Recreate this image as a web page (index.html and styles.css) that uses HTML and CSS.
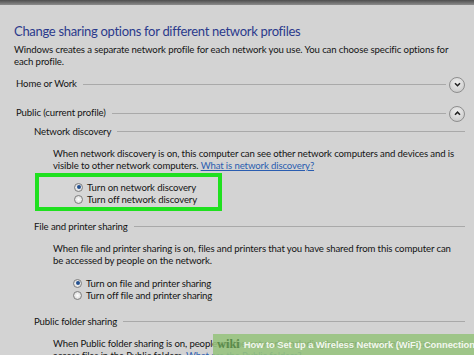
FILE: index.html
```html
<!DOCTYPE html>
<html>
<head>
<meta charset="utf-8">
<link rel="stylesheet" href="styles.css">
</head>
<body>
<div class="topbar"></div>
<div class="page">
  <h1 class="title">Change sharing options for different network profiles</h1>
  <p class="intro">Windows creates a separate network profile for each network you use. You can choose specific options for<br>each profile.</p>

  <div class="group">
    <span class="group-label">Home or Work</span>
    <span class="rule"></span>
    <span class="chev"><svg width="11" height="11" viewBox="0 0 11 11"><path d="M3 4.2 L5.5 6.7 L8 4.2" fill="none" stroke="#222" stroke-width="1.6"/></svg></span>
  </div>

  <div class="group public">
    <span class="group-label">Public (current profile)</span>
    <span class="rule"></span>
    <span class="chev"><svg width="11" height="11" viewBox="0 0 11 11"><path d="M3 6.7 L5.5 4.2 L8 6.7" fill="none" stroke="#222" stroke-width="1.6"/></svg></span>
  </div>

  <div class="section first">
    <span class="section-label">Network discovery</span>
    <span class="rule"></span>
  </div>
  <p class="desc">When network discovery is on, this computer can see other network computers and devices and is<br>visible to other network computers. <a class="link">What is network discovery?</a></p>
  <div class="highlight">
    <label class="radio"><span class="dot on"></span>Turn on network discovery</label>
    <label class="radio"><span class="dot"></span>Turn off network discovery</label>
  </div>

  <div class="section after-box">
    <span class="section-label">File and printer sharing</span>
    <span class="rule"></span>
  </div>
  <p class="desc">When file and printer sharing is on, files and printers that you have shared from this computer can<br>be accessed by people on the network.</p>
  <div class="options">
    <label class="radio"><span class="dot on"></span>Turn on file and printer sharing</label>
    <label class="radio"><span class="dot"></span>Turn off file and printer sharing</label>
  </div>

  <div class="section last">
    <span class="section-label">Public folder sharing</span>
    <span class="rule"></span>
  </div>
  <p class="desc">When Public folder sharing is on, people on the network, including homegroup members, can<br>access files in the Public folders. <a class="link">What are the Public folders?</a></p>
</div>
<div class="banner"><span class="wiki">wiki</span>How to Set up a Wireless Network (WiFi) Connection</div>
</body>
</html>
```
FILE: styles.css
```css
html, body {
  margin: 0;
  padding: 0;
}
body {
  width: 474px;
  height: 355px;
  overflow: hidden;
  background: #d3d3d3;
  font-family: "Lato", "Open Sans", sans-serif;
  font-size: 9.6px;
  letter-spacing: -0.12px;
  color: #141414;
  position: relative;
}
.topbar {
  height: 5px;
  background: linear-gradient(#4e4e4e, #8c8c8c);
}
.page {
  padding: 0 9px 0 14px;
}
.title {
  margin: 16px 0 0;
  font-weight: normal;
  font-size: 13px;
  letter-spacing: -0.3px;
  color: #2b3a8c;
  line-height: 20px;
  white-space: nowrap;
}
.intro {
  margin: 3px 0 0;
  line-height: 12px;
  white-space: nowrap;
}
.group {
  display: flex;
  align-items: center;
  margin-top: 5px;
  height: 20px;
}
.group.public {
  margin-top: 9px;
}
.group-label {
  padding-left: 2px;
  padding-right: 6px;
  white-space: nowrap;
}
.rule {
  flex: 1;
  height: 1px;
  background: #a9a9a9;
  margin-top: 3px;
}
.chev {
  flex-shrink: 0;
  width: 14px;
  height: 14px;
  border-radius: 50%;
  border: 1px solid #8e8e8e;
  background: radial-gradient(circle at 50% 35%, #f0f0f0, #c2c2c2);
  display: flex;
  align-items: center;
  justify-content: center;
  margin-left: 3px;
  margin-top: 3px;
}
.section {
  display: flex;
  align-items: center;
  padding-left: 20px;
  height: 14px;
}
.section .rule {
  margin-top: 0;
}
.section.first {
  margin-top: 2px;
}
.section.after-box {
  margin-top: 8px;
}
.section.last {
  margin-top: 13px;
}
.section-label {
  padding-right: 6px;
  white-space: nowrap;
}
.desc {
  margin: 10px 0 0 39px;
  line-height: 12px;
  white-space: nowrap;
}
.link {
  color: #2a5db0;
  text-decoration: underline;
}
.highlight {
  margin: 1px 0 0 21px;
  width: 187px;
  height: 38px;
  border: 4px solid #1fe01f;
  padding: 4px 0 2px 35px;
  display: flex;
  flex-direction: column;
  box-sizing: border-box;
  background: #d6d6d6;
}
.options {
  margin: 10px 0 0 59px;
  display: flex;
  flex-direction: column;
}
.radio {
  display: flex;
  align-items: center;
  height: 12px;
  white-space: nowrap;
}
.dot {
  flex-shrink: 0;
  width: 9px;
  height: 9px;
  border-radius: 50%;
  border: 1px solid #7f7f7f;
  background: radial-gradient(circle, #ffffff, #d0d0d0);
  margin-right: 4px;
  box-sizing: border-box;
  position: relative;
}
.dot.on::after {
  content: "";
  position: absolute;
  left: 1.5px;
  top: 1.5px;
  width: 4px;
  height: 4px;
  border-radius: 50%;
  background: #23508f;
}
.banner {
  position: absolute;
  left: 213px;
  right: 0;
  bottom: 0;
  height: 21px;
  background: rgba(150, 195, 125, 0.88);
  color: #f2f7ee;
  font-family: "Liberation Sans", sans-serif;
  font-weight: bold;
  font-size: 9.4px;
  letter-spacing: -0.05px;
  line-height: 21px;
  white-space: nowrap;
  overflow: hidden;
  padding-left: 4px;
}
.wiki {
  font-family: "Liberation Serif", serif;
  font-size: 12.5px;
  color: #5a8a4a;
  margin-right: 4px;
}
```
